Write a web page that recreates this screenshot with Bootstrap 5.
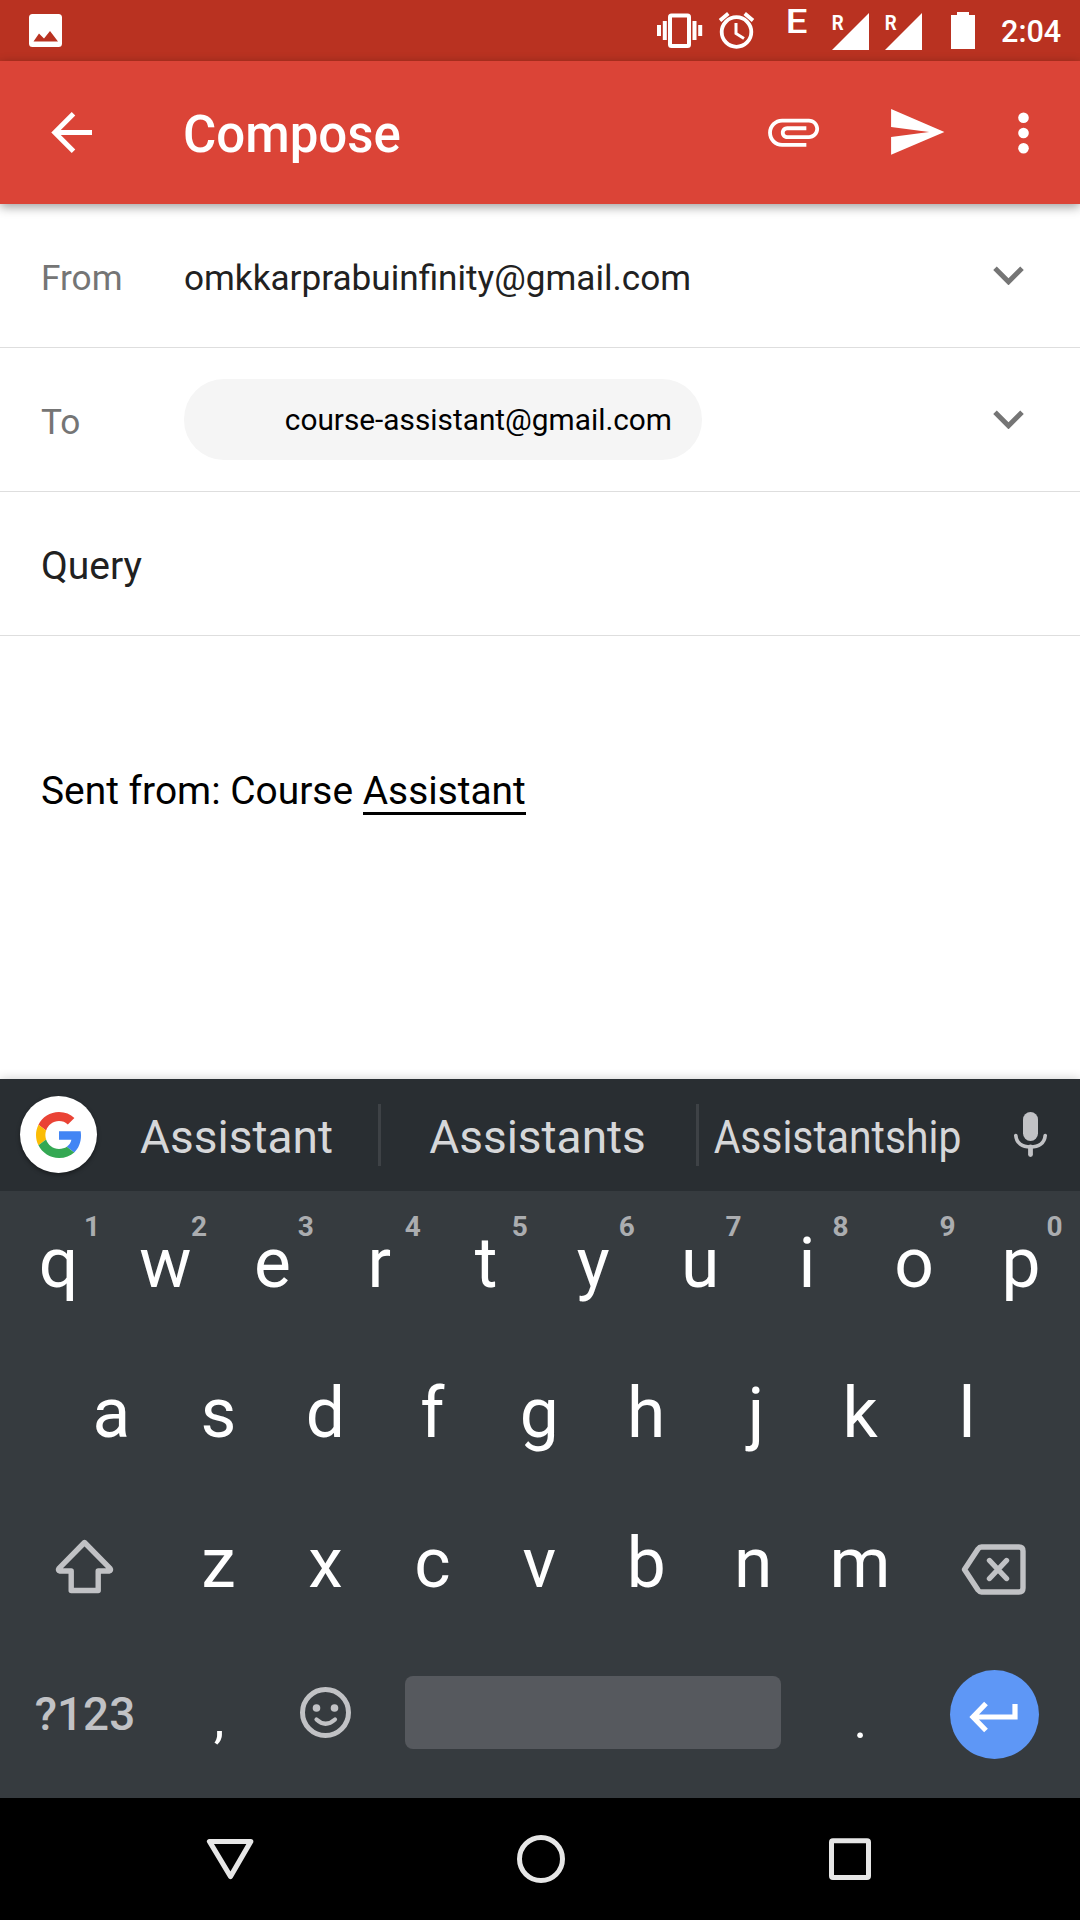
<!DOCTYPE html>
<html lang="en">
<head>
<meta charset="utf-8">
<meta name="viewport" content="width=device-width, initial-scale=1">
<title>Compose</title>
<link href="https://cdn.jsdelivr.net/npm/bootstrap@5.3.0/dist/css/bootstrap.min.css" rel="stylesheet">
<style>
  body { font-family: Roboto, sans-serif; }
  .screen { width: 1080px; height: 1920px; background: #fff; }
  svg { display: block; flex: none; }
  .weight-medium { font-weight: 500; }

  /* status bar */
  .statusbar { height: 61px; background: #b93221; color: #fff; padding: 0 20px 0 29px; }
  .net-type { width: 20px; height: 48px; margin-left: 32px; margin-right: 25px; font-size: 34px; line-height: 42px; transform: scaleX(1.13); }
  .clock { font-size: 30.6px; line-height: 61px; padding: 1px 0 0; margin-left: 26px; width: 59px; }

  /* app bar */
  .appbar { height: 143px; background: #db4437; color: #fff; padding: 0 50px 0 51px; box-shadow: 0 3px 10px rgba(0,0,0,.38); z-index: 2; }
  .appbar-title { font-size: 51px; line-height: 60px; padding: 4px 0 0; margin-left: 90px; }

  /* fields */
  .field { height: 144px; padding: 0 56px 0 41px; border-bottom: 1px solid #dedede; color: #212121; }
  .field-label { width: 143px; font-size: 35.2px; line-height: 44px; color: #757575; padding-top: 4px; }
  .field-value { font-size: 35.15px; line-height: 44px; padding-top: 4px; }
  .chip { height: 81px; width: 518px; border-radius: 40px; background: #f5f5f5; color: #000; font-size: 29.8px; line-height: 81px; padding-right: 30px; }
  .subject { font-size: 39px; line-height: 48px; padding-top: 4px; }
  .message { padding: 130px 41px 0; font-size: 38.9px; line-height: 50px; color: #000; }
  .composing { border-bottom: 3px solid #000; height: 49px; line-height: 50px; }

  /* suggestions */
  .suggestions { height: 112px; background: #292e32; color: #d6d7d9; font-size: 46px; padding: 0 0 1px 20px; box-shadow: 0 0 10px rgba(0,0,0,.2); }
  .g-logo { width: 77px; height: 77px; background: #fff; box-shadow: 0 2px 4px rgba(0,0,0,.4); }
  .suggest { line-height: 60px; padding-top: 4px; }
  .suggest-first { width: 281px; padding-right: 2px; }
  .suggest-second { width: 315px; padding-right: 2px; }
  .suggest-third { width: 315px; padding-right: 37px; }
  .suggest-third span { display: inline-block; transform: scaleX(.888); }
  .rule { width: 3px; height: 62px; background: #3e4246; }

  /* keyboard */
  .keyboard { height: 607px; background: #363b3f; color: #fff; }
  .key-row { height: 150px; }
  .key { width: 106.95px; font-size: 69.5px; line-height: 145px; }
  .hint { top: 21px; left: 67px; width: 40px; font-size: 28px; line-height: 30px; color: #abadb0; }
  .row-q { padding-left: 5px; }
  .row-a { padding-left: 58px; }
  .key-j { padding-left: 6px; }
  .key-symbols { width: 165px; font-size: 45.8px; line-height: 147px; color: #c1c2c5; padding-left: 5px; }
  .key-comma { font-size: 54px; line-height: 155px; padding-left: 1px; }
  .key-period { width: 107px; font-size: 50px; line-height: 160px; }
  .spacebar { width: 376px; height: 73px; margin: 35px 26px 0 26px; border-radius: 8px; background: #56595e; }
  .enter { width: 89px; height: 89px; margin: 29px 0 0 36px; background: #5e97f6; }

  .navbar-sys { height: 122px; background: #000; padding: 0 205px 0 206px; }
</style>
</head>
<body>
<div class="screen d-flex flex-column overflow-hidden">

  <header class="statusbar d-flex">
    <svg width="33" height="61" viewBox="29 0 33 61"><path fill="#fff" fill-rule="evenodd" d="M32.500 14H58.500Q62 14 62 17.500V43.500Q62 47 58.500 47H32.500Q29 47 29 43.500V17.500Q29 14 32.500 14ZM33.500 41.500H58L50 31L44 38.500L39 33.500Z"/></svg>
    <svg class="ms-auto" width="98" height="61" viewBox="657 0 98 61" fill="none" stroke="#fff">
      <rect x="670" y="15.500" width="19" height="30.500" rx="1.500" stroke-width="4"/>
      <path stroke-width="4" d="M659 25v11M664.800 21v19M694.500 21v19M700.200 25v11"/>
      <circle cx="736.500" cy="32" r="14.800" stroke-width="3.800"/>
      <path stroke-width="3" d="M736 23v10.500l8 5"/>
      <path stroke-width="3.800" d="M720 20.500l8.300-7M753 20.500l-8.300-7"/>
    </svg>
    <div class="net-type weight-medium">E</div>
    <svg width="143" height="61" viewBox="832 0 143 61">
      <g fill="#fff">
        <path d="M832 50L869 13V50ZM885 50L922 13V50ZM951 15h6v-3h12v3h6V49H951Z"/>
        <g font-family="Roboto" font-weight="700" font-size="21">
          <text x="831.700" y="30" textLength="12" lengthAdjust="spacingAndGlyphs">R</text>
          <text x="884.700" y="30" textLength="12" lengthAdjust="spacingAndGlyphs">R</text>
        </g>
      </g>
    </svg>
    <div class="clock text-nowrap weight-medium">2:04</div>
  </header>

  <nav class="appbar d-flex align-items-center position-relative">
    <svg width="42" height="42" viewBox="51 112 42 42"><path fill="none" stroke="#fff" stroke-width="5" d="M92 132.500H56M73.500 113.800L54.800 132.500L73.500 151.200"/></svg>
    <div class="appbar-title weight-medium">Compose</div>
    <svg class="ms-auto" width="262" height="62" viewBox="768 101.500 262 62" fill="#fff">
      <path transform="translate(763 100.300) scale(2.550)" d="M7.500 18C4.460 18 2 15.540 2 12.500S4.460 7 7.500 7H18c2.210 0 4 1.790 4 4s-1.790 4-4 4H9.500C8.120 15 7 13.880 7 12.500S8.120 10 9.500 10H17v1.500H9.500c-.55 0-1 .45-1 1s.45 1 1 1H18c1.380 0 2.500-1.120 2.500-2.500S19.380 8.500 18 8.500H7.500c-2.210 0-4 1.790-4 4s1.790 4 4 4H17V18H7.500z"/>
      <path transform="translate(886 101) scale(2.540)" d="M2.010 21L23 12 2.010 3 2 10l15 2-15 2z"/>
      <circle cx="1023.500" cy="117.300" r="5.300"/><circle cx="1023.500" cy="132.500" r="5.300"/><circle cx="1023.500" cy="147.700" r="5.300"/>
    </svg>
  </nav>

  <main class="flex-grow-1">
    <div class="field d-flex align-items-center">
      <div class="field-label">From</div>
      <div class="field-value">omkkarprabuinfinity@gmail.com</div>
      <svg class="ms-auto" width="31" height="19" viewBox="0 0 31 19"><path fill="none" stroke="#757575" stroke-width="5" d="M2 2.300L15.500 15.800L29 2.300"/></svg>
    </div>
    <div class="field d-flex align-items-center">
      <div class="field-label">To</div>
      <div class="chip text-end">course-assistant@gmail.com</div>
      <svg class="ms-auto" width="31" height="19" viewBox="0 0 31 19"><path fill="none" stroke="#757575" stroke-width="5" d="M2 2.300L15.500 15.800L29 2.300"/></svg>
    </div>
    <div class="field d-flex align-items-center"><div class="subject">Query</div></div>
    <div class="message d-flex"><span>Sent from: Course&nbsp;</span><span class="composing">Assistant</span></div>
  </main>

  <section class="suggestions d-flex align-items-center">
    <div class="g-logo rounded-circle d-flex align-items-center justify-content-center">
      <svg width="46" height="46" viewBox="0 0 48 48">
        <path fill="#ea4335" d="M24 9.500c3.540 0 6.710 1.220 9.210 3.600l6.850-6.850C35.900 2.380 30.470 0 24 0 14.620 0 6.510 5.380 2.560 13.220l7.980 6.190C12.430 13.720 17.740 9.500 24 9.500z"/>
        <path fill="#4285f4" d="M46.980 24.550c0-1.570-.15-3.090-.38-4.550H24v9.020h12.940c-.58 2.960-2.260 5.480-4.780 7.180l7.730 6c4.510-4.180 7.090-10.360 7.090-17.650z"/>
        <path fill="#fbbc05" d="M10.530 28.590c-.48-1.450-.76-2.990-.76-4.590s.27-3.140.76-4.590l-7.980-6.190C.92 16.460 0 20.120 0 24c0 3.880.92 7.540 2.560 10.780l7.970-6.190z"/>
        <path fill="#34a853" d="M24 48c6.480 0 11.930-2.130 15.890-5.810l-7.730-6c-2.150 1.450-4.920 2.300-8.160 2.300-6.260 0-11.570-4.220-13.470-9.910l-7.980 6.190C6.510 42.620 14.620 48 24 48z"/>
      </svg>
    </div>
    <div class="suggest suggest-first text-center">Assistant</div>
    <div class="rule"></div>
    <div class="suggest suggest-second text-center">Assistants</div>
    <div class="rule"></div>
    <div class="suggest suggest-third d-flex justify-content-center"><span>Assistantship</span></div>
    <svg width="33" height="45" viewBox="1014 1112 33 45"><rect x="1023" y="1112" width="15" height="29" rx="7.500" fill="#c1c2c5"/><path fill="none" stroke="#c1c2c5" stroke-width="3.600" stroke-linecap="round" d="M1015.800 1135.500C1016.500 1143 1022 1147 1030.500 1147S1044.500 1143 1045.200 1135.500"/><path stroke="#c1c2c5" stroke-width="4.800" stroke-linecap="round" d="M1030.500 1147v7.500"/></svg>
  </section>

  <section class="keyboard">
    <div class="key-row row-q d-flex text-center">
      <div class="key position-relative">q<b class="hint position-absolute">1</b></div>
      <div class="key position-relative">w<b class="hint position-absolute">2</b></div>
      <div class="key position-relative">e<b class="hint position-absolute">3</b></div>
      <div class="key position-relative">r<b class="hint position-absolute">4</b></div>
      <div class="key position-relative">t<b class="hint position-absolute">5</b></div>
      <div class="key position-relative">y<b class="hint position-absolute">6</b></div>
      <div class="key position-relative">u<b class="hint position-absolute">7</b></div>
      <div class="key position-relative">i<b class="hint position-absolute">8</b></div>
      <div class="key position-relative">o<b class="hint position-absolute">9</b></div>
      <div class="key position-relative">p<b class="hint position-absolute">0</b></div>
    </div>
    <div class="key-row row-a d-flex text-center">
      <div class="key">a</div><div class="key">s</div><div class="key">d</div><div class="key">f</div><div class="key">g</div><div class="key">h</div><div class="key key-j">j</div><div class="key">k</div><div class="key">l</div>
    </div>
    <div class="key-row d-flex text-center">
      <svg width="165" height="150" viewBox="0 1491 165 150"><path fill="none" stroke="#c1c2c5" stroke-width="5.400" stroke-linejoin="round" d="M84.500 1542.500L59 1568.300Q57.500 1570.500 60 1571H71.200V1590.500H98.200V1571H109Q111.500 1570.500 110 1568.300Z"/></svg>
      <div class="key">z</div><div class="key">x</div><div class="key">c</div><div class="key">v</div><div class="key">b</div><div class="key">n</div><div class="key">m</div>
      <svg width="166" height="150" viewBox="914 1491 166 150" fill="none" stroke="#c1c2c5" stroke-linejoin="round"><path stroke-width="5.400" d="M964.500 1569.500L978 1549Q979.500 1547 981.500 1547H1019Q1023 1547 1023 1551V1588Q1023 1592 1019 1592H981.500Q979.500 1592 978 1590Z"/><path stroke-width="5.400" stroke-linecap="round" d="M989.500 1560.500L1006.500 1578.500M1006.500 1560.500L989.500 1578.500"/></svg>
    </div>
    <div class="key-row d-flex text-center">
      <div class="key-symbols weight-medium">?123</div>
      <div class="key key-comma">,</div>
      <svg width="107" height="150" viewBox="272 1641 107 150"><g fill="none" stroke="#c1c2c5"><circle cx="325.500" cy="1712.500" r="23" stroke-width="5"/><path stroke-width="4.200" stroke-linecap="round" d="M316.500 1719.500Q325.500 1728 335 1719.500"/></g><circle cx="316.500" cy="1708" r="3.800" fill="#c1c2c5"/><circle cx="334.500" cy="1708" r="3.800" fill="#c1c2c5"/></svg>
      <div class="spacebar"></div>
      <div class="key-period">.</div>
      <div class="enter rounded-circle"><svg width="89" height="89" viewBox="950 1670 89 89"><path fill="none" stroke="#fff" stroke-width="5.200" d="M1015 1704V1717H975M986 1703.500L973 1717L986 1730.500"/></svg></div>
    </div>
  </section>

  <footer class="navbar-sys d-flex align-items-center justify-content-between">
    <svg width="48" height="50" viewBox="206 1834 48 50"><path fill="none" stroke="#e6e6e6" stroke-width="5.200" stroke-linejoin="round" d="M209.500 1841.500H250.800L230.500 1876.500Z"/></svg>
    <svg width="50" height="50" viewBox="516 1834 50 50"><circle cx="540" cy="1859" r="21.500" fill="none" stroke="#e6e6e6" stroke-width="5"/></svg>
    <svg width="46" height="50" viewBox="829 1834 46 50"><rect x="831.500" y="1840.700" width="37" height="36.800" rx="1.500" fill="none" stroke="#e6e6e6" stroke-width="5"/></svg>
  </footer>
</div>
<script src="https://cdn.jsdelivr.net/npm/bootstrap@5.3.0/dist/js/bootstrap.bundle.min.js"></script>
</body>
</html>
